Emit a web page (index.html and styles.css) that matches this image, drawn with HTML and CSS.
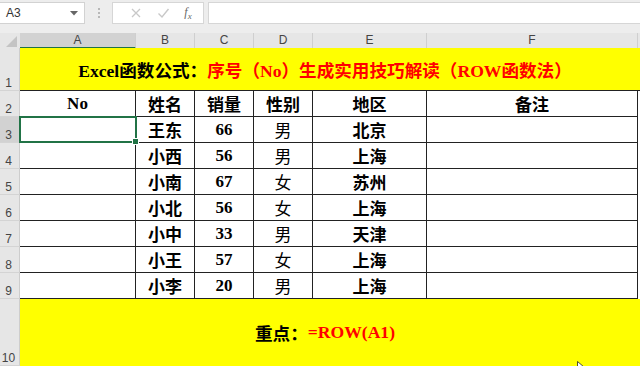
FILE: index.html
```html
<!DOCTYPE html>
<html lang="zh-CN">
<head>
    <meta charset="UTF-8">
    <title>ROW函数法</title>
    <link rel="stylesheet" href="styles.css">
</head>
<body>
    <div class="formula-bar">
        <div class="name-box">
            <span>A3</span>
            <svg class="drop" width="8" height="5" viewBox="0 0 8 5"><path d="M0 0h8L4 4.5z" fill="#666"/></svg>
        </div>
        <div class="grip"><i></i><i></i><i></i></div>
        <div class="fx-tools">
            <svg width="12" height="12" viewBox="0 0 12 12"><path d="M2 2l8 8M10 2l-8 8" stroke="#c8c8c8" stroke-width="1.3"/></svg>
            <svg width="13" height="12" viewBox="0 0 13 12"><path d="M1.5 6.5l3.5 3.5 6.5-8" stroke="#c8c8c8" stroke-width="1.4" fill="none"/></svg>
            <span class="fx">f<sub>x</sub></span>
        </div>
        <div class="formula-input"></div>
    </div>

    <div class="sheet">
        <div class="row col-heads">
            <div class="corner"><svg width="11" height="11" viewBox="0 0 11 11"><path d="M11 0v11H0z" fill="#c4c4c4"/></svg></div>
            <div class="ch active">A</div>
            <div class="ch">B</div>
            <div class="ch">C</div>
            <div class="ch">D</div>
            <div class="ch">E</div>
            <div class="ch">F</div>
        </div>

        <div class="row banner-row">
            <div class="rh">1</div>
            <div class="banner">Excel函数公式：<span class="red">序号（No）生成实用技巧解读（ROW函数法）</span></div>
        </div>

        <div class="row data head-row">
            <div class="rh">2</div>
            <div class="cell">No</div>
            <div class="cell">姓名</div>
            <div class="cell">销量</div>
            <div class="cell">性别</div>
            <div class="cell">地区</div>
            <div class="cell">备注</div>
        </div>
        <div class="row data">
            <div class="rh sel">3</div>
            <div class="cell selected"><span class="sel-box"></span></div>
            <div class="cell">王东</div>
            <div class="cell">66</div>
            <div class="cell light">男</div>
            <div class="cell">北京</div>
            <div class="cell"></div>
        </div>
        <div class="row data">
            <div class="rh">4</div>
            <div class="cell"></div>
            <div class="cell">小西</div>
            <div class="cell">56</div>
            <div class="cell light">男</div>
            <div class="cell">上海</div>
            <div class="cell"></div>
        </div>
        <div class="row data">
            <div class="rh">5</div>
            <div class="cell"></div>
            <div class="cell">小南</div>
            <div class="cell">67</div>
            <div class="cell light">女</div>
            <div class="cell">苏州</div>
            <div class="cell"></div>
        </div>
        <div class="row data">
            <div class="rh">6</div>
            <div class="cell"></div>
            <div class="cell">小北</div>
            <div class="cell">56</div>
            <div class="cell light">女</div>
            <div class="cell">上海</div>
            <div class="cell"></div>
        </div>
        <div class="row data">
            <div class="rh">7</div>
            <div class="cell"></div>
            <div class="cell">小中</div>
            <div class="cell">33</div>
            <div class="cell light">男</div>
            <div class="cell">天津</div>
            <div class="cell"></div>
        </div>
        <div class="row data">
            <div class="rh">8</div>
            <div class="cell"></div>
            <div class="cell">小王</div>
            <div class="cell">57</div>
            <div class="cell light">女</div>
            <div class="cell">上海</div>
            <div class="cell"></div>
        </div>
        <div class="row data">
            <div class="rh">9</div>
            <div class="cell"></div>
            <div class="cell">小李</div>
            <div class="cell">20</div>
            <div class="cell light">男</div>
            <div class="cell">上海</div>
            <div class="cell"></div>
        </div>

        <div class="row note-row">
            <div class="rh">10</div>
            <div class="note">重点：<span class="red">=ROW(A1)</span></div>
            <svg class="pointer" width="8" height="10" viewBox="0 0 8 10"><path d="M0.5 0.5v8l2-2 1.5 3 1.2-.6-1.5-2.9H7z" fill="#fff" stroke="#222" stroke-width="0.8"/></svg>
        </div>
    </div>
</body>
</html>
```

FILE: styles.css
```css
body {
    margin: 0;
    width: 640px;
    height: 366px;
    overflow: hidden;
    background: #ffffff;
    font-family: "Liberation Sans", Arial, sans-serif;
}

/* formula bar */
.formula-bar {
    height: 33px;
    background: #ededed;
    display: flex;
    align-items: flex-start;
    padding-top: 2px;
    box-sizing: border-box;
}
.name-box {
    width: 85px;
    height: 22px;
    background: #fff;
    border: 1px solid #d2d2d2;
    border-left: none;
    box-sizing: border-box;
    display: flex;
    align-items: center;
    justify-content: space-between;
    padding: 0 6px 0 6px;
    font-size: 12px;
    color: #333;
}
.grip {
    width: 27px;
    height: 22px;
    display: flex;
    flex-direction: column;
    align-items: center;
    justify-content: center;
    gap: 2px;
}
.grip i {
    width: 2px;
    height: 2px;
    background: #b8b8b8;
}
.fx-tools {
    width: 92px;
    height: 22px;
    background: #fff;
    border: 1px solid #d6d6d6;
    box-sizing: border-box;
    display: flex;
    align-items: center;
    justify-content: space-around;
    padding: 0 4px 0 10px;
}
.fx {
    font-family: "Liberation Serif", serif;
    font-style: italic;
    font-size: 12px;
    color: #666;
}
.fx sub {
    font-size: 9px;
}
.formula-input {
    flex: 1;
    height: 22px;
    margin-left: 4px;
    background: #fff;
    border: 1px solid #d6d6d6;
    border-right: none;
    box-sizing: border-box;
}

/* sheet */
.row {
    display: grid;
    grid-template-columns: 20px 116px 59px 59px 59px 114px 211px 2px;
}
.col-heads {
    height: 15px;
    background: #e6e6e6;
}
.corner {
    display: flex;
    align-items: flex-end;
    justify-content: flex-end;
    padding: 0 3px 2px 0;
}
.ch {
    font-size: 12px;
    color: #444;
    text-align: center;
    line-height: 15px;
    border-right: 1px solid #cfcfcf;
    box-sizing: border-box;
}
.ch.active {
    background: #d2d2d2;
    border-bottom: 2px solid #217346;
    line-height: 14px;
}

.rh {
    background: #e6e6e6;
    border-bottom: 1px solid #d4d4d4;
    border-right: 1px solid #cdcdcd;
    box-sizing: border-box;
    font-size: 12px;
    color: #444;
    display: flex;
    align-items: flex-end;
    justify-content: center;
    padding: 0 2px 0 0;
}
.rh.sel {
    background: #d2d2d2;
}

.banner-row {
    height: 43px;
}
.banner {
    grid-column: 2 / 9;
    background: #ffff00;
    border-bottom: 1px solid #222;
    box-sizing: border-box;
    display: flex;
    align-items: center;
    justify-content: center;
    padding: 0 10px 0 0;
    font-family: "Liberation Serif", "Noto Sans CJK SC", serif;
    font-weight: bold;
    font-size: 17.6px;
    color: #000;
}
.red {
    color: #ff0000;
}

.data {
    height: 26px;
}
.cell {
    border-right: 1px solid #222;
    border-bottom: 1px solid #222;
    box-sizing: border-box;
    display: flex;
    align-items: center;
    justify-content: center;
    font-family: "Liberation Serif", "Noto Sans CJK SC", serif;
    font-weight: bold;
    font-size: 17px;
    color: #000;
}
.cell.light {
    font-weight: normal;
}
.cell.selected {
    position: relative;
}
.sel-box {
    position: absolute;
    left: -1px;
    top: -1px;
    right: -2px;
    bottom: -1px;
    border: 2px solid #217346;
}
.sel-box::after {
    content: "";
    position: absolute;
    right: -4px;
    bottom: -4px;
    width: 5px;
    height: 5px;
    background: #217346;
    border: 1px solid #fff;
}

.note-row {
    height: 67px;
    position: relative;
}
.note {
    grid-column: 2 / 9;
    background: #ffff00;
    display: flex;
    align-items: center;
    justify-content: center;
    padding: 0 10px 0 0;
    font-family: "Liberation Serif", "Noto Sans CJK SC", serif;
    font-weight: bold;
    font-size: 17.6px;
    color: #000;
}
.pointer {
    position: absolute;
    left: 577px;
    top: 62px;
}
```
